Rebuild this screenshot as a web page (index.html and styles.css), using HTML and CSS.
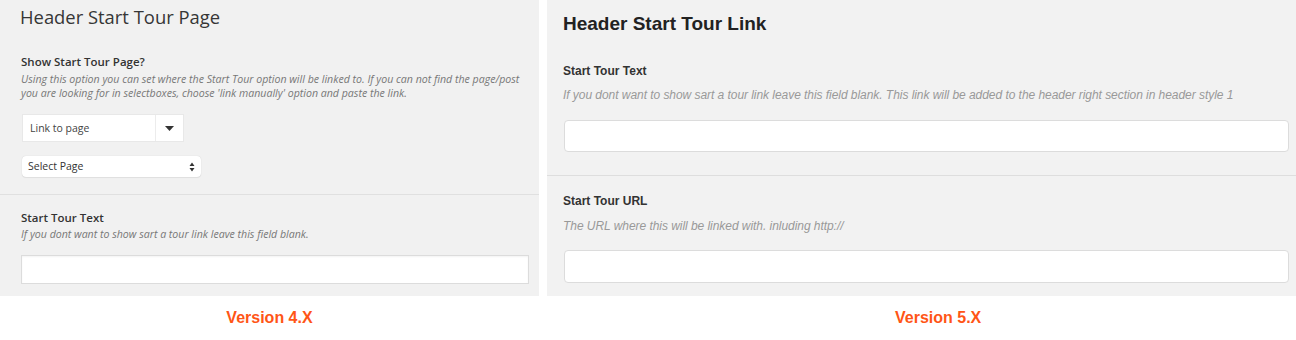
FILE: index.html
```html
<!DOCTYPE html>
<html>
<head>
<meta charset="utf-8">
<link rel="stylesheet" href="styles.css">
</head>
<body>
<div class="page">
  <div class="panels">
    <section class="panel v4">
      <h2 class="v4-title">Header Start Tour Page</h2>
      <div class="v4-field first">
        <div class="v4-label">Show Start Tour Page?</div>
        <div class="v4-desc">Using this option you can set where the Start Tour option will be linked to. If you can not find the page/post<br>you are looking for in selectboxes, choose 'link manually' option and paste the link.</div>
        <div class="s2">
          <span class="s2-text">Link to page</span>
          <span class="s2-arrow"><svg width="9" height="5" viewBox="0 0 9 5"><path d="M0 0H9L4.5 5Z" fill="#333"/></svg></span>
        </div>
        <div class="sel">
          <span class="sel-text">Select Page</span>
          <svg class="sel-arrows" width="6" height="10" viewBox="0 0 6 10"><path d="M0.5 4H5.5L3 0.5Z M0.5 6H5.5L3 9.5Z" fill="#333"/></svg>
        </div>
      </div>
      <div class="v4-field second">
        <div class="v4-label">Start Tour Text</div>
        <div class="v4-desc">If you dont want to show sart a tour link leave this field blank.</div>
        <div class="v4-input"></div>
      </div>
    </section>
    <section class="panel v5">
      <h2 class="v5-title">Header Start Tour Link</h2>
      <div class="v5-field first">
        <div class="v5-label">Start Tour Text</div>
        <div class="v5-desc">If you dont want to show sart a tour link leave this field blank. This link will be added to the header right section in header style 1</div>
        <div class="v5-input"></div>
      </div>
      <div class="v5-field second">
        <div class="v5-label">Start Tour URL</div>
        <div class="v5-desc">The URL where this will be linked with. inluding http://</div>
        <div class="v5-input"></div>
      </div>
    </section>
  </div>
  <div class="captions">
    <div class="cap cap4">Version 4.X</div>
    <div class="cap cap5">Version 5.X</div>
  </div>
</div>
</body>
</html>
```
FILE: styles.css
```css
html, body {
  margin: 0;
  padding: 0;
  background: #ffffff;
}
.page {
  width: 1296px;
  height: 340px;
  overflow: hidden;
}
.panels {
  display: flex;
  gap: 8px;
  height: 296px;
}
.panel {
  box-sizing: border-box;
  height: 296px;
}

/* ---------- Version 4 ---------- */
.v4 {
  width: 539px;
  background: #f1f1f1;
  font-family: "Open Sans", "Noto Sans", sans-serif;
}
.v4-title {
  margin: 0;
  padding: 5px 0 0 20px;
  font-size: 18.4px;
  line-height: 24px;
  font-weight: 500;
  color: #363636;
}
.v4-field {
  padding-left: 21px;
  padding-right: 10px;
}
.v4-field.first {
  padding-top: 23px;
  padding-bottom: 17px;
  border-bottom: 1px solid #e0e0e0;
}
.v4-field.second {
  padding-top: 13px;
}
.v4-label {
  font-size: 11.5px;
  line-height: 19px;
  font-weight: 600;
  color: #333;
}
.v4-desc {
  margin-top: 1px;
  font-size: 10.6px;
  line-height: 14px;
  font-style: italic;
  color: #777;
  white-space: nowrap;
}
.v4-field.second .v4-desc {
  margin-top: 0;
}
.s2 {
  margin-top: 14px;
  margin-left: 1px;
  width: 162px;
  height: 28px;
  box-sizing: border-box;
  background: #fff;
  border: 1px solid #e8e8e8;
  display: flex;
  align-items: center;
}
.s2-text {
  flex: 1;
  padding-left: 7px;
  font-size: 10.5px;
  color: #444;
  line-height: 26px;
}
.s2-arrow {
  width: 27px;
  height: 26px;
  border-left: 1px solid #ececec;
  display: flex;
  align-items: center;
  justify-content: center;
}
.s2-arrow svg { display: block; }
.sel {
  margin-top: 14px;
  margin-left: 1px;
  width: 179px;
  height: 21px;
  box-sizing: border-box;
  background: #fff;
  border-radius: 4px;
  box-shadow: 0 0 1px rgba(0,0,0,0.18), 0 1px 1px rgba(0,0,0,0.06);
  display: flex;
  align-items: center;
  padding: 0 6px 0 6px;
}
.sel-text {
  flex: 1;
  font-size: 10.5px;
  color: #333;
  line-height: 21px;
}
.sel-arrows { display: block; }
.v4-input {
  margin-top: 14px;
  width: 508px;
  height: 29px;
  box-sizing: border-box;
  background: #fff;
  border: 1px solid #dcdcdc;
  box-shadow: inset 0 1px 2px rgba(0,0,0,0.05);
}

/* ---------- Version 5 ---------- */
.v5 {
  flex: 1;
  background: #f2f2f2;
  font-family: "Liberation Sans", Arial, sans-serif;
}
.v5-title {
  margin: 0;
  padding: 12px 0 0 16px;
  font-size: 19px;
  line-height: 24px;
  font-weight: 700;
  color: #222;
}
.v5-field {
  padding-left: 16px;
  padding-right: 7px;
}
.v5-field.first {
  padding-top: 27px;
  padding-bottom: 23px;
  border-bottom: 1px solid #dedede;
}
.v5-field.second {
  padding-top: 17px;
}
.v5-label {
  font-size: 12px;
  line-height: 16px;
  font-weight: 700;
  color: #333;
}
.v5-desc {
  margin-top: 8px;
  font-size: 12px;
  line-height: 16px;
  font-style: italic;
  color: #999;
  letter-spacing: -0.05px;
}
.v5-field.second .v5-desc {
  margin-top: 9px;
}
.v5-input {
  margin-top: 17px;
  margin-left: 1px;
  height: 32px;
  box-sizing: border-box;
  background: #fff;
  border: 1px solid #dcdcdc;
  border-radius: 4px;
}
.v5-field.second .v5-input {
  margin-top: 16px;
  height: 33px;
}

/* ---------- captions ---------- */
.captions {
  display: flex;
  gap: 8px;
  padding-top: 12px;
}
.cap {
  font-family: "Liberation Sans", Arial, sans-serif;
  font-weight: 700;
  font-size: 16px;
  line-height: 20px;
  color: #ff5516;
}
.cap4 {
  width: 539px;
  text-align: center;
}
.cap5 {
  padding-left: 348px;
}
```
